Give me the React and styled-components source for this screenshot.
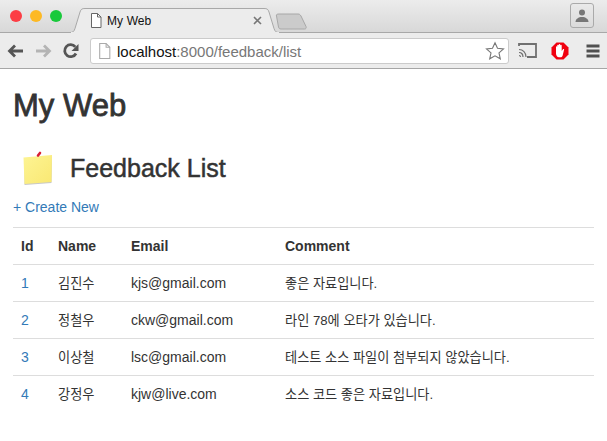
import React from "react";
import styled, { createGlobalStyle } from "styled-components";

const Global = createGlobalStyle`
  html, body { margin: 0; padding: 0; background: #fff; }
  body { font-family: "Liberation Sans", "Noto Sans CJK KR", sans-serif; color: #333; width: 607px; height: 441px; overflow: hidden; }
`;

const TabStrip = styled.div`
  height: 32px;
  display: flex;
  align-items: flex-start;
  background: linear-gradient(#ececec, #d8d8d8);
  position: relative;
`;
const Lights = styled.div`
  display: flex;
  gap: 8px;
  padding: 10px 0 0 10px;
  width: 70px;
  flex: none;
  box-sizing: border-box;
`;
const Light = styled.span`
  width: 12px;
  height: 12px;
  border-radius: 50%;
  background: ${(p) => p.$color};
`;
const Tab = styled.div`
  position: relative;
  width: 210px;
  height: 25px;
  margin-top: 8px;
  flex: none;
  display: flex;
  align-items: center;
  padding: 0 0 0 20px;
  box-sizing: border-box;
  font-size: 12px;
  color: #111;
`;
const TabShape = styled.svg`
  position: absolute;
  inset: 0;
`;
const TabLabel = styled.span`
  position: relative;
  flex: 1;
  margin-left: 5px;
  letter-spacing: 0.1px;
`;
const TabClose = styled.svg`
  position: relative;
  margin-right: 18px;
  flex: none;
`;
const TabIcon = styled.svg`
  position: relative;
  flex: none;
`;
const NewTab = styled.svg`
  margin: 13px 0 0 -6px;
  flex: none;
`;
const Profile = styled.div`
  margin: 3px 13px 0 auto;
  width: 24px;
  height: 25px;
  border: 1px solid #aaa;
  border-radius: 3px;
  box-sizing: border-box;
  display: flex;
  align-items: center;
  justify-content: center;
`;
const Toolbar = styled.div`
  height: 37px;
  box-sizing: border-box;
  background: #ececec;
  border-top: 1px solid #a8a8a8;
  border-bottom: 1px solid #a6a6a6;
  display: flex;
  align-items: center;
  padding-left: 7px;
`;
const NavButtons = styled.div`
  display: flex;
  align-items: center;
  gap: 11px;
  width: 83px;
  flex: none;
`;
const Omnibox = styled.div`
  width: 419px;
  height: 26px;
  flex: none;
  margin-top: 1px;
  box-sizing: border-box;
  background: #fff;
  border: 1px solid #cbcbcb;
  border-radius: 3px;
  display: flex;
  align-items: center;
  padding: 0 3px 0 7px;
  font-size: 15px;
`;
const Url = styled.span`
  flex: 1;
  margin-left: 6px;
  color: #777;
`;
const Host = styled.span`
  color: #111;
`;
const Extensions = styled.div`
  display: flex;
  align-items: center;
  margin-left: 9px;
  gap: 14px;
`;
const MenuIcon = styled.svg`
  margin-left: 3px;
`;
const Content = styled.main`
  padding: 0 13px;
`;
const Title = styled.h1`
  font-size: 31px;
  font-weight: 400;
  line-height: 36px;
  margin: 19px 0 0;
  color: #333;
  -webkit-text-stroke: 0.8px #333;
`;
const SubHeading = styled.div`
  display: flex;
  align-items: center;
  margin-top: 20px;
  height: 48px;
  padding-left: 8px;
`;
const SubTitle = styled.h2`
  font-size: 25px;
  font-weight: 400;
  margin: 0 0 0 15px;
  color: #333;
  -webkit-text-stroke: 0.5px #333;
`;
const CreateLink = styled.a`
  display: block;
  font-size: 14px;
  line-height: 20px;
  margin-top: 5px;
  color: #337ab7;
`;
const Table = styled.table`
  width: 581px;
  margin-top: 10px;
  border-collapse: collapse;
  table-layout: fixed;
  font-size: 14px;
`;
const Th = styled.th`
  width: ${(p) => p.$w}px;
  box-sizing: border-box;
  text-align: left;
  padding: 8px;
  line-height: 20px;
  border-top: 1px solid #ddd;
  border-bottom: 1px solid #ddd;
  color: #333;
`;
const Td = styled.td`
  padding: 8px;
  line-height: 20px;
  border-top: ${(p) => (p.$first ? "0" : "1px solid #ddd")};
  color: #333;
`;
const Korean = styled.span`
  font-size: 13.2px;
  line-height: 1;
`;
const IdLink = styled.a`
  color: #337ab7;
`;

const rows = [
  [1, "김진수", "kjs@gmail.com", "좋은 자료입니다."],
  [2, "정철우", "ckw@gmail.com", "라인 78에 오타가 있습니다."],
  [3, "이상철", "lsc@gmail.com", "테스트 소스 파일이 첨부되지 않았습니다."],
  [4, "강정우", "kjw@live.com", "소스 코드 좋은 자료입니다."],
];

const PageIcon = ({ w = 12, h = 15, color = "#666" }) => (
  <TabIcon width={w} height={h} viewBox="0 0 12 15">
    <path d="M1.500.5h6l3.500 3.500v10.500H1.500z" fill="#fff" stroke={color} />
    <path d="M7.500.5v3.500H11" fill="none" stroke={color} />
  </TabIcon>
);

export default function App() {
  return (
    <>
      <Global />
      <TabStrip>
        <Lights>
          <Light $color="#fc3d44" />
          <Light $color="#fdb924" />
          <Light $color="#19c93b" />
        </Lights>
        <Tab>
          <TabShape width="210" height="25" viewBox="0 0 210 25">
            <path d="M0 24.500c3 0 4-1 5-4L10 4c1-3 2-3.500 5-3.500h179c3 0 4 .5 5 3.500l5 16.500c1 3 2 4 5 4" fill="#ececec" stroke="#a8a8a8" />
            <path d="M1 25h208v-1H1z" fill="#ececec" />
          </TabShape>
          <PageIcon />
          <TabLabel>My Web</TabLabel>
          <TabClose width="9" height="9" viewBox="0 0 9 9">
            <path d="M1 1l7 7M8 1l-7 7" stroke="#777" strokeWidth="1.600" />
          </TabClose>
        </Tab>
        <NewTab width="34" height="17" viewBox="0 0 34 17">
          <path d="M5 1h19c1.500 0 2 .5 3 2l5 10.500c.5 1.500 0 2.500-1.500 2.500H7c-1.500 0-2-.5-2.500-2L2.500 3C2 1.500 3 1 5 1z" fill="#cbcbcb" stroke="#a8a8a8" />
        </NewTab>
        <Profile>
          <svg width="16" height="14" viewBox="0 0 16 14">
            <circle cx="8" cy="3.500" r="3" fill="#777" />
            <path d="M1.500 13c0-3 3-5 6.500-5s6.500 2 6.500 5z" fill="#777" />
          </svg>
        </Profile>
      </TabStrip>
      <Toolbar>
        <NavButtons>
          <svg width="17" height="14" viewBox="0 0 17 14">
            <path d="M16 7H3M8 1.500 2.500 7 8 12.500" fill="none" stroke="#555" strokeWidth="2.800" />
          </svg>
          <svg width="17" height="14" viewBox="0 0 17 14">
            <path d="M1 7h13M9 1.500 14.500 7 9 12.500" fill="none" stroke="#b4b4b4" strokeWidth="2.800" />
          </svg>
          <svg width="16" height="16" viewBox="0 0 16 16">
            <path d="M13 10.500A6 6 0 1 1 12.300 3.800" fill="none" stroke="#555" strokeWidth="2.800" />
            <path d="M15.500 1v7h-7z" fill="#555" />
          </svg>
        </NavButtons>
        <Omnibox>
          <PageIcon w={13} h={16} color="#aaa" />
          <Url>
            <Host>localhost</Host>:8000/feedback/list
          </Url>
          <svg width="20" height="20" viewBox="0 0 20 20">
            <path d="M10 1.800l2.500 5.500 6 .6-4.500 4 1.300 5.900-5.300-3-5.300 3L6 11.900l-4.500-4 6-.6z" fill="#fff" stroke="#777" strokeWidth="1.100" />
          </svg>
        </Omnibox>
        <Extensions>
          <svg width="19" height="15" viewBox="0 0 19 15">
            <path d="M1 3V1h17v13H9" fill="none" stroke="#707070" strokeWidth="1.800" />
            <path d="M1 6.500c4 0 7 3 7 7.500M1 9.500c2.500 0 4 2 4 4.500M1 12.500c1 0 1.500.5 1.500 1.500" fill="none" stroke="#707070" strokeWidth="1.200" />
          </svg>
          <svg width="18" height="18" viewBox="0 0 18 18">
            <path d="M5.500 0.500h7l5 5v7l-5 5h-7l-5-5v-7z" fill="#f0000f" />
            <path d="M5 10V5c0-1 1.200-1 1.200 0V3.500c0-1 1.500-1 1.500 0V2.800c0-1 1.500-1 1.500 0v.7c0-1 1.500-1 1.500 0V9l1.300-1.700c.7-.8 1.500 0 1 .8L11.500 14c-.5.8-1 1.300-2 1.300H8C6 15.300 5 13 5 11.500z" fill="#fff" />
          </svg>
          <MenuIcon width="14" height="14" viewBox="0 0 14 14">
            <path d="M.5 2h13M.5 7h13M.5 12h13" stroke="#505050" strokeWidth="2.800" />
          </MenuIcon>
        </Extensions>
      </Toolbar>
      <Content>
        <Title>My Web</Title>
        <SubHeading>
          <svg width="34" height="36" viewBox="0 0 34 36">
            <defs>
              <linearGradient id="note" x1="0" y1="0" x2="1" y2="1">
                <stop offset="0" stopColor="#fdf493" />
                <stop offset="1" stopColor="#f9e873" />
              </linearGradient>
            </defs>
            <path d="M3.500 9 31 6 30.500 33 3.500 35z" fill="#c8c8c8" />
            <path d="M2.500 7.500 31 5 30.500 32 3.500 34z" fill="url(#note)" />
            <path d="M17 5.500 19 3" stroke="#d81e36" strokeWidth="2.600" strokeLinecap="round" />
          </svg>
          <SubTitle>Feedback List</SubTitle>
        </SubHeading>
        <CreateLink>+ Create New</CreateLink>
        <Table>
          <thead>
            <tr>
              <Th $w={37}>Id</Th>
              <Th $w={73}>Name</Th>
              <Th $w={154}>Email</Th>
              <Th>Comment</Th>
            </tr>
          </thead>
          <tbody>
            {rows.map((r, i) => (
              <tr key={r[0]}>
                <Td $first={i === 0}><IdLink>{r[0]}</IdLink></Td>
                <Td $first={i === 0}><Korean>{r[1]}</Korean></Td>
                <Td $first={i === 0}>{r[2]}</Td>
                <Td $first={i === 0}><Korean>{r[3]}</Korean></Td>
              </tr>
            ))}
          </tbody>
        </Table>
      </Content>
    </>
  );
}
